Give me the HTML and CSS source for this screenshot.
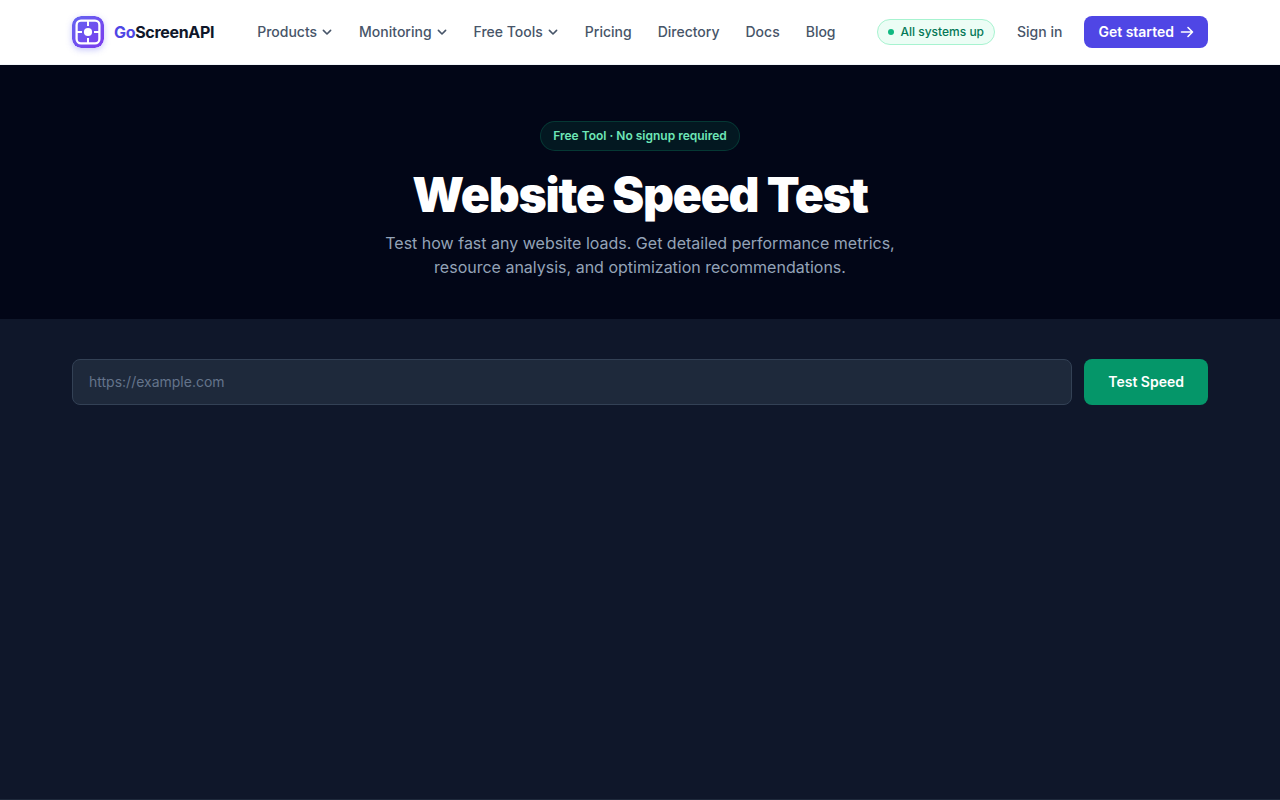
FILE: index.html
```html
<!DOCTYPE html>
<html lang="en">
<head>
<meta charset="utf-8">
<meta name="viewport" content="width=device-width, initial-scale=1">
<title>Website Speed Test - GoScreenAPI</title>
<link rel="stylesheet" href="styles.css">
</head>
<body>
<header class="site-header">
  <div class="container header-row">
    <a class="brand" href="#">
      <svg class="brand-mark" viewBox="0 0 32 32" aria-hidden="true">
        <defs>
          <linearGradient id="mark" x1="0" y1="0" x2="1" y2="1">
            <stop offset="0" stop-color="#6366f1"/>
            <stop offset="1" stop-color="#7c3aed"/>
          </linearGradient>
        </defs>
        <rect width="32" height="32" rx="9" fill="url(#mark)"/>
        <rect x="4.6" y="4.6" width="22.8" height="22.8" rx="4.4" fill="none" stroke="#fff" stroke-width="2.3"/>
        <path d="M16 5v5M16 22v5M5 16h5M22 16h5" stroke="#fff" stroke-width="2"/>
        <circle cx="16" cy="16" r="4.1" fill="#fff"/>
      </svg>
      <span class="brand-name"><span class="brand-accent">Go</span>ScreenAPI</span>
    </a>
    <nav class="main-nav" aria-label="Main">
      <button class="nav-item" type="button">Products
        <svg class="chevron" viewBox="0 0 12 12" aria-hidden="true"><path d="M2.4 4.4L6 8l3.6-3.6"/></svg>
      </button>
      <button class="nav-item" type="button">Monitoring
        <svg class="chevron" viewBox="0 0 12 12" aria-hidden="true"><path d="M2.4 4.4L6 8l3.6-3.6"/></svg>
      </button>
      <button class="nav-item" type="button">Free Tools
        <svg class="chevron" viewBox="0 0 12 12" aria-hidden="true"><path d="M2.4 4.4L6 8l3.6-3.6"/></svg>
      </button>
      <a class="nav-item" href="#">Pricing</a>
      <a class="nav-item" href="#">Directory</a>
      <a class="nav-item" href="#">Docs</a>
      <a class="nav-item" href="#">Blog</a>
    </nav>
    <div class="header-actions">
      <a class="status" href="#"><span class="status-dot"></span>All systems up</a>
      <a class="sign-in" href="#">Sign in</a>
      <a class="get-started" href="#">Get started
        <svg class="arrow" viewBox="0 0 14 14" aria-hidden="true"><path d="M1.5 7h11M8 2.5L12.5 7 8 11.5"/></svg>
      </a>
    </div>
  </div>
</header>
<main>
  <section class="hero">
    <span class="hero-badge">Free Tool · No signup required</span>
    <h1 class="hero-title">Website Speed Test</h1>
    <p class="hero-text">Test how fast any website loads. Get detailed performance metrics, resource analysis, and optimization recommendations.</p>
  </section>
  <section class="tool">
    <form class="container test-form">
      <input class="url-input" type="url" placeholder="https://example.com" aria-label="Website URL">
      <button class="test-button" type="submit">Test Speed</button>
    </form>
  </section>
</main>
<footer class="site-footer"></footer>
</body>
</html>
```
FILE: styles.css
```css
*, *::before, *::after {
  box-sizing: border-box;
}

body {
  margin: 0;
  background: #0f172a;
  font-family: Inter, "Liberation Sans", sans-serif;
  font-size: 14px;
  line-height: 20px;
}

a {
  color: inherit;
  text-decoration: none;
}

button,
input {
  font: inherit;
}

.container {
  max-width: 1200px;
  margin: 0 auto;
  padding: 0 32px;
}

.site-header {
  background: #fff;
  border-bottom: 1px solid #f1f5f9;
}

.header-row {
  display: flex;
  align-items: center;
  min-height: 64px;
}

.brand {
  display: flex;
  align-items: center;
  gap: 10px;
  margin-right: 30px;
}

.brand-mark {
  width: 32px;
  height: 32px;
  border-radius: 9px;
  box-shadow: 0 2px 6px rgba(99, 102, 241, 0.35);
}

.brand-name {
  color: #0f172a;
  font-size: 16px;
  font-weight: 700;
  letter-spacing: -0.02em;
}

.brand-accent {
  color: #4f46e5;
}

.main-nav {
  display: flex;
}

.nav-item {
  display: flex;
  align-items: center;
  gap: 4px;
  padding: 8px 13px;
  border: 0;
  background: none;
  color: #475569;
  font-weight: 500;
  cursor: pointer;
}

.chevron {
  width: 12px;
  height: 12px;
  fill: none;
  stroke: currentColor;
  stroke-width: 1.6;
  stroke-linecap: round;
  stroke-linejoin: round;
}

.header-actions {
  display: flex;
  align-items: center;
  gap: 22px;
  margin-left: auto;
}

.status {
  display: flex;
  align-items: center;
  gap: 6px;
  padding: 4px 10px;
  border: 1px solid #a7f3d0;
  border-radius: 13px;
  background: #ecfdf5;
  color: #047857;
  font-size: 12px;
  font-weight: 500;
  line-height: 16px;
}

.status-dot {
  width: 6px;
  height: 6px;
  border-radius: 50%;
  background: #10b981;
}

.sign-in {
  color: #475569;
  font-weight: 500;
}

.get-started {
  display: flex;
  align-items: center;
  gap: 6px;
  padding: 6px 14px;
  border-radius: 8px;
  background: #4f46e5;
  color: #fff;
  font-weight: 600;
}

.arrow {
  width: 14px;
  height: 14px;
  fill: none;
  stroke: currentColor;
  stroke-width: 1.6;
  stroke-linecap: round;
  stroke-linejoin: round;
}

.hero {
  display: flex;
  flex-direction: column;
  align-items: center;
  padding: 56px 32px 40px;
  background: #020617;
  text-align: center;
}

.hero-badge {
  padding: 6px 12px;
  border: 1px solid rgba(16, 185, 129, 0.2);
  border-radius: 15px;
  background: rgba(16, 185, 129, 0.1);
  color: #6ee7b7;
  font-size: 12px;
  font-weight: 600;
  line-height: 16px;
}

.hero-title {
  margin: 20px 0 12px;
  color: #fff;
  font-size: 48px;
  font-weight: 900;
  line-height: 48px;
  letter-spacing: -0.025em;
}

.hero-text {
  max-width: 576px;
  margin: 0;
  color: #94a3b8;
  font-size: 16px;
  line-height: 24px;
}

.tool {
  min-height: 60vh;
  padding: 40px 0;
}

.test-form {
  display: flex;
  gap: 12px;
}

.url-input {
  flex: 1;
  min-width: 0;
  padding: 12px 16px;
  border: 1px solid #334155;
  border-radius: 8px;
  background: #1e293b;
  color: #fff;
}

.url-input::placeholder {
  color: #64748b;
}

.test-button {
  padding: 12px 24px;
  border: 0;
  border-radius: 8px;
  background: #059669;
  color: #fff;
  font-weight: 600;
  cursor: pointer;
}

.site-footer {
  border-top: 1px solid #1e293b;
}
```
